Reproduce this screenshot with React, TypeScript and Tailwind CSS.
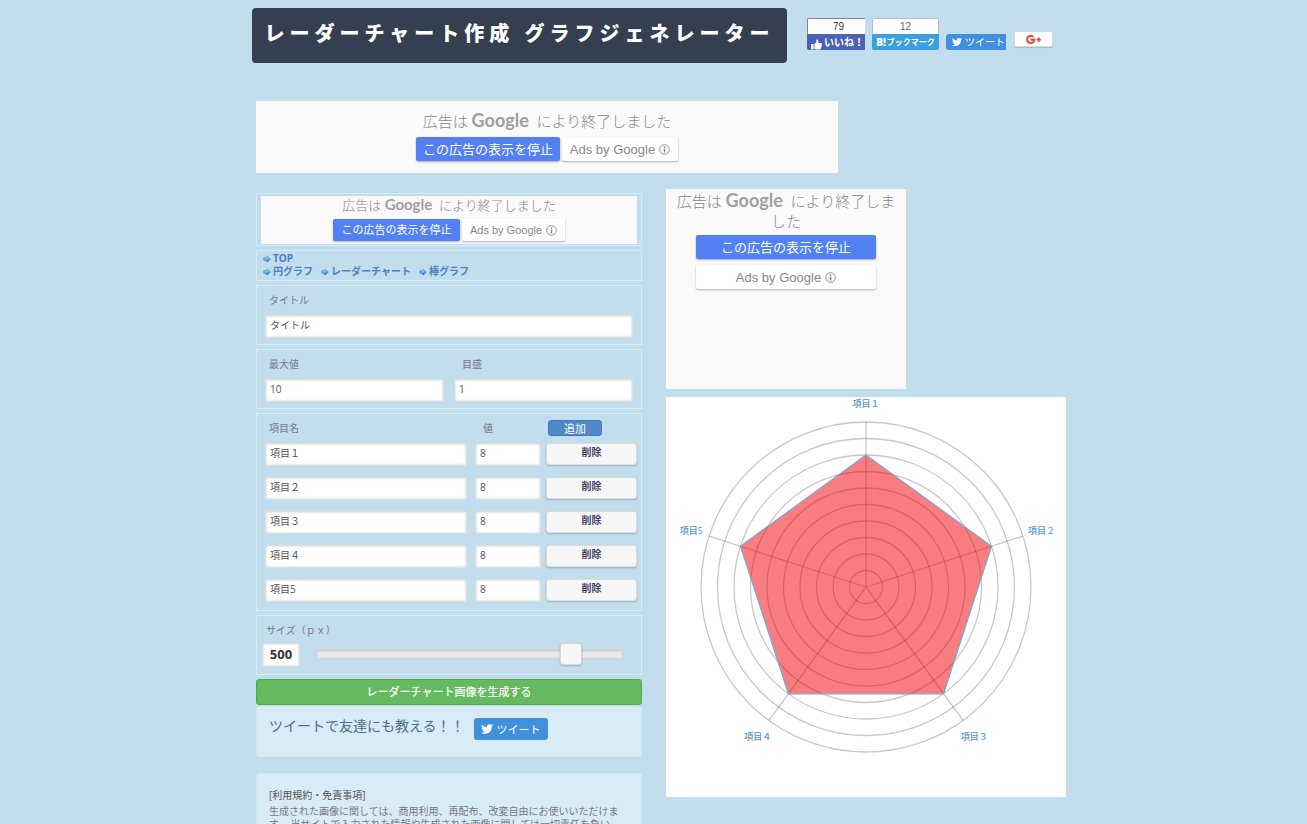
import React, { useState } from 'react';
import { FaGooglePlusG, FaTwitter } from 'react-icons/fa';

interface Item {
  id: number;
  name: string;
  value: string;
}

const INITIAL_ITEMS: Item[] = [
  { id: 1, name: '項目１', value: '8' },
  { id: 2, name: '項目２', value: '8' },
  { id: 3, name: '項目３', value: '8' },
  { id: 4, name: '項目４', value: '8' },
  { id: 5, name: '項目5', value: '8' },
];

const NAV_LINKS = ['円グラフ', 'レーダーチャート', '棒グラフ'];

const FIELD =
  'h-[23px] min-w-0 rounded-[3px] border border-[#dcdfe0] bg-white px-1 pb-1 text-[10px] leading-[13px] text-[#555] shadow-[inset_0_0_2px_1px_rgba(0,0,0,0.1)] outline-none';

const Panel: React.FC<{ className?: string; children: React.ReactNode }> = ({ className = '', children }) => (
  <section className={`border border-[#d5edf9] ${className}`}>{children}</section>
);

const GoogleWord: React.FC<{ className: string }> = ({ className }) => (
  <span className={`font-[Lato] leading-none font-bold text-[#a0a0a0] ${className}`}>Google</span>
);

const InfoIcon: React.FC = () => (
  <svg viewBox="0 0 12 12" className="h-[11px] w-[11px]" aria-hidden="true">
    <circle cx="6" cy="6" r="5.2" fill="none" stroke="currentColor" />
    <rect x="5.2" y="2.6" width="1.7" height="1.6" fill="currentColor" />
    <rect x="5.2" y="5" width="1.7" height="4.3" fill="currentColor" />
  </svg>
);

interface AdProps {
  size: 'wide' | 'small' | 'box';
}

const Ad: React.FC<AdProps> = ({ size }) => {
  if (size === 'small') {
    return (
      <aside className="bg-[#fafafa] pt-px pb-[3px] text-center text-[#888]">
        <p className="h-[17px] text-[13px] leading-4 font-light">
          広告は <GoogleWord className="text-[15px]" />&nbsp; により終了しました
        </p>
        <div className="mt-[5px] flex justify-center gap-[2px]">
          <button className="h-[22px] w-[127px] rounded-[2px] bg-[#5380f2] pb-px text-[11px] leading-[21px] text-white shadow-[0_1px_2px_rgba(0,0,0,0.3)]">
            この広告の表示を停止
          </button>
          <button className="flex h-[22px] w-[103px] items-center justify-center gap-1 rounded-[2px] bg-white font-['Liberation_Sans'] text-[11px] shadow-[0_1px_2px_rgba(0,0,0,0.3)]">
            Ads by Google <InfoIcon />
          </button>
        </div>
      </aside>
    );
  }

  const box = size === 'box';
  return (
    <aside
      className={`bg-[#fafafa] text-center text-[#888] ${box ? 'h-[200px] w-[240px] px-2 pt-[2px]' : 'h-[72px] w-[582px] pt-[10px]'}`}
    >
      <p className={`text-[15px] leading-5 font-light ${box ? 'h-10' : 'h-5'}`}>
        広告は <GoogleWord className="text-[18px]" />&nbsp; により終了しま{box && <br />}した
      </p>
      <div className={box ? 'mx-auto mt-1 flex w-[180px] flex-col gap-[6px]' : 'mt-[6px] flex justify-center gap-[2px]'}>
        <button
          className={`h-6 rounded-[2px] bg-[#5380f2] pb-px text-[13px] leading-[22px] text-white shadow-[0_1px_2px_rgba(0,0,0,0.3)] ${box ? '' : 'w-[144px]'}`}
        >
          この広告の表示を停止
        </button>
        <button
          className={`flex h-6 items-center justify-center gap-1 rounded-[2px] bg-white font-['Liberation_Sans'] text-[13px] shadow-[0_1px_2px_rgba(0,0,0,0.3)] ${box ? '' : 'w-[116px]'}`}
        >
          Ads by Google <InfoIcon />
        </button>
      </div>
    </aside>
  );
};

const SocialButtons: React.FC = () => (
  <div className="mt-[10px] flex h-8 items-end">
    <div className="w-[58px] overflow-hidden rounded-l-[2px]">
      <div className="h-4 border-t border-l border-[#7f8694] bg-white pl-1 text-center font-['Liberation_Sans'] text-[10px] leading-4 text-[#333]">
        79
      </div>
      <button className="flex h-4 w-full items-end justify-between bg-[#4c62b2] pr-px pl-1 text-[10px] leading-4 font-bold whitespace-nowrap text-white">
        <svg viewBox="0 0 11 11" className="h-[11px] w-[11px] shrink-0" fill="currentColor" aria-hidden="true">
          <path d="M0 5h2.6v5.6H0Z" />
          <path d="M3.4 5.2 5.4 3V0.8C5.4 0.2 7.3 0.2 7.3 2v2h2.6c1.2 0 1.2 1.5 0.6 1.8 0.6 0.5 0.4 1.4-0.2 1.6 0.5 0.6 0.2 1.3-0.4 1.5 0.3 0.8-0.2 1.6-1 1.6H5L3.4 10Z" />
        </svg>
        いいね！
      </button>
    </div>
    <div className="ml-[7px] w-[67px] overflow-hidden rounded-[2px]">
      <div className="h-4 border border-b-0 border-[#a9bfdc] bg-white text-center font-['Liberation_Sans'] text-[10px] leading-4 text-[#666]">
        12
      </div>
      <button className="flex h-4 w-full items-center justify-center gap-px bg-[#3ca0dc] text-[8px] leading-4 font-bold whitespace-nowrap text-white">
        <span className="text-[10px] font-extrabold">B!</span>ブックマーク
      </button>
    </div>
    <button className="ml-[7px] flex h-4 w-[60px] items-center justify-end gap-[3px] rounded-l-[3px] bg-[#4190de] pr-px text-[10px] leading-4 whitespace-nowrap text-white">
      <FaTwitter className="h-[10px] w-[10px]" />
      ツイート
    </button>
    <button
      aria-label="Google+"
      className="mb-[3px] ml-2 flex h-4 w-[39px] items-center justify-center rounded-[2px] border border-[#d8d8d8] bg-white text-[#d64a3f] shadow-[0_1px_1px_rgba(0,0,0,0.15)]"
    >
      <FaGooglePlusG className="h-[15px] w-[15px]" stroke="currentColor" strokeWidth="20" />
    </button>
  </div>
);

const NavLink: React.FC<{ label: string }> = ({ label }) => (
  <a href="#" className="flex items-center gap-[2px]">
    <svg viewBox="0 0 8 8" className="mt-px h-2 w-2" aria-hidden="true">
      <path d="M4 0.4 8 4 4 7.6 3.4 6.2H1.4L0 4.6V3.4L1.4 2H3.4Z" fill="#68a8e0" />
      <path d="M3 5.2 7.4 4.2 4 7.4Z" fill="#3f83c8" />
      <path d="M1.2 3.4 3.8 3V1.8L5.4 3.4Z" fill="#b4daf5" />
    </svg>
    {label}
  </a>
);

const CX = 200;
const CY = 190;
const RING = 165;

const pointAt = (index: number, count: number, radius: number) => {
  const angle = (Math.PI * 2 * index) / count - Math.PI / 2;
  return { x: CX + Math.cos(angle) * radius, y: CY + Math.sin(angle) * radius };
};

interface RadarChartProps {
  items: Item[];
  max: number;
  step: number;
}

const RadarChart: React.FC<RadarChartProps> = ({ items, max, step }) => {
  const limit = max > 0 ? max : 10;
  const unit = step > 0 ? step : 1;
  const rings = Array.from({ length: Math.min(100, Math.floor(limit / unit)) }, (_, i) => ((i + 1) * unit * RING) / limit);
  const points = items
    .map((item, i) => {
      const p = pointAt(i, items.length, (Number(item.value) / limit) * RING);
      return `${p.x},${p.y}`;
    })
    .join(' ');

  return (
    <svg viewBox="0 0 400 400" className="mt-2 block w-full max-w-[400px] bg-white">
      <g fill="none" stroke="#000" strokeWidth="1.3" strokeOpacity="0.22">
        {rings.map((r) => (
          <circle key={r} cx={CX} cy={CY} r={r} />
        ))}
        {items.map((item, i) => {
          const p = pointAt(i, items.length, RING);
          return <line key={item.id} x1={CX} y1={CY} x2={p.x} y2={p.y} />;
        })}
      </g>
      <polygon points={points} fill="#f20008" fillOpacity="0.51" stroke="#7ba7d0" strokeWidth="1.2" />
      <g fill="#5596cb" fontSize="9" fontWeight="500">
        {items.map((item, i) => {
          const p = pointAt(i, items.length, 184);
          const cos = p.x - CX;
          const anchor = Math.abs(cos) < 120 ? 'middle' : cos > 0 ? 'start' : 'end';
          const x = anchor === 'middle' ? p.x : cos > 0 ? p.x - 13 : p.x + 12;
          return (
            <text key={item.id} x={x} y={p.y + 4} textAnchor={anchor}>
              {item.name}
            </text>
          );
        })}
      </g>
    </svg>
  );
};

export default function App() {
  const [title, setTitle] = useState('タイトル');
  const [max, setMax] = useState('10');
  const [step, setStep] = useState('1');
  const [size, setSize] = useState('500');
  const [items, setItems] = useState<Item[]>(INITIAL_ITEMS);

  const updateItem = (id: number, patch: Partial<Item>) => {
    setItems(items.map((item) => (item.id === id ? { ...item, ...patch } : item)));
  };

  const addItem = () => {
    const id = Math.max(0, ...items.map((item) => item.id)) + 1;
    setItems([...items, { id, name: `項目${id}`, value: '8' }]);
  };

  return (
    <div className="h-screen overflow-y-auto bg-[#c2ddeb] font-['Open_Sans','Noto_Sans_CJK_JP',sans-serif] text-[10px] leading-[13px] text-[#778] [scrollbar-width:none]">
      <div className="mx-auto max-w-[827px] pt-2 pl-3">
        <header className="flex items-start gap-5">
          <h1 className="flex h-[55px] w-[535px] items-center justify-center rounded-[4px] bg-[#343f50] pb-1 text-[20px] leading-none font-black tracking-[5px] whitespace-nowrap text-white">
            レーダーチャート作成 グラフジェネレーター
          </h1>
          <SocialButtons />
        </header>

        <main className="pl-1">
          <div className="mt-[38px]">
            <Ad size="wide" />
          </div>

          <div className="mt-4 flex items-start gap-6">
            <div className="mt-1 w-[386px] shrink-0">
              <form className="flex flex-col gap-1" onSubmit={(e) => e.preventDefault()}>
                <Panel className="px-1 pt-[2px] pb-px">
                  <Ad size="small" />
                </Panel>

                <Panel className="px-[6px] pt-px pb-[2px]">
                  <nav className="font-bold text-[#4a80c4]">
                    <div className="flex">
                      <NavLink label="TOP" />
                    </div>
                    <div className="flex gap-2">
                      {NAV_LINKS.map((label) => (
                        <NavLink key={label} label={label} />
                      ))}
                    </div>
                  </nav>
                </Panel>

                <Panel className="flex flex-col gap-2 px-2 pt-2 pb-[6px]">
                  <label htmlFor="title" className="pl-1">タイトル</label>
                  <input id="title" className={FIELD} value={title} onChange={(e) => setTitle(e.target.value)} />
                </Panel>

                <Panel className="grid grid-cols-2 gap-[10px] px-2 pt-2 pb-[6px]">
                  <div className="flex flex-col gap-2">
                    <label htmlFor="max" className="pl-1">最大値</label>
                    <input id="max" className={FIELD} value={max} onChange={(e) => setMax(e.target.value)} />
                  </div>
                  <div className="flex flex-col gap-2">
                    <label htmlFor="step" className="pl-2">目盛</label>
                    <input id="step" className={FIELD} value={step} onChange={(e) => setStep(e.target.value)} />
                  </div>
                </Panel>

                <Panel className="pt-[6px] pr-1 pb-2 pl-2">
                  <div className="mb-[7px] flex h-4 items-center">
                    <span className="flex-1 pl-1">項目名</span>
                    <span className="w-[66px] pl-2">値</span>
                    <div className="ml-[5px] w-[91px] pl-[2px]">
                      <button
                        type="button"
                        onClick={addItem}
                        className="block h-4 w-[54px] rounded-[3px] border border-[#3f7bbd] bg-[#5088c8] text-[11px] leading-[13px] text-white"
                      >
                        追加
                      </button>
                    </div>
                  </div>
                  <div className="flex flex-col gap-[11px]">
                    {items.map((item) => (
                      <div key={item.id} className="flex">
                        <input
                          aria-label="項目名"
                          className={`${FIELD} flex-1`}
                          value={item.name}
                          onChange={(e) => updateItem(item.id, { name: e.target.value })}
                        />
                        <input
                          aria-label="値"
                          className={`${FIELD} ml-2 w-[66px]`}
                          value={item.value}
                          onChange={(e) => updateItem(item.id, { value: e.target.value })}
                        />
                        <button
                          type="button"
                          onClick={() => setItems(items.filter((other) => other.id !== item.id))}
                          className="ml-[5px] h-[22px] w-[91px] rounded-[3px] border border-[#dcdcdc] bg-[#f6f6f6] pb-[3px] font-bold text-[#446] shadow-[0_1px_2px_rgba(0,0,0,0.2)]"
                        >
                          削除
                        </button>
                      </div>
                    ))}
                  </div>
                </Panel>

                <Panel className="pt-2 pr-[17px] pb-[7px] pl-[5px]">
                  <label htmlFor="size" className="block pl-1">サイズ（ｐｘ）</label>
                  <div className="mt-[6px] flex h-6 items-center gap-4">
                    <input
                      id="size"
                      className="h-6 w-[38px] rounded-[3px] border border-[#dcdfe0] bg-white pb-[3px] text-center text-[13px] font-bold text-[#333] shadow-[inset_0_0_2px_1px_rgba(0,0,0,0.1)] outline-none"
                      value={size}
                      onChange={(e) => setSize(e.target.value)}
                    />
                    <input
                      type="range"
                      aria-label="サイズ"
                      min={200}
                      max={550}
                      value={size}
                      onChange={(e) => setSize(e.target.value)}
                      className="mb-[3px] h-[10px] min-w-0 flex-1 appearance-none rounded-[3px] border border-[#d4d4d4] bg-[#e7e7e7] shadow-[inset_0_1px_2px_rgba(0,0,0,0.15)] [&::-webkit-slider-thumb]:h-[22px] [&::-webkit-slider-thumb]:w-[22px] [&::-webkit-slider-thumb]:appearance-none [&::-webkit-slider-thumb]:rounded-[3px] [&::-webkit-slider-thumb]:border [&::-webkit-slider-thumb]:border-[#d6d6d6] [&::-webkit-slider-thumb]:bg-[#f6f6f6] [&::-webkit-slider-thumb]:shadow-[0_1px_2px_rgba(0,0,0,0.2)]"
                    />
                  </div>
                </Panel>

                <button className="h-[26px] rounded-[3px] border border-[#4fab4f] bg-[#65b95f] text-[11px] leading-[22px] font-medium text-white">
                  レーダーチャート画像を生成する
                </button>
              </form>

              <section className="mt-px flex h-[51px] items-start gap-[9px] rounded-[3px] border border-[#cde9f3] bg-[#d9ebf6] pt-[11px] pl-3">
                <p className="text-[14px] leading-4 text-[#48708a]">ツイートで友達にも教える！！</p>
                <button className="flex h-[22px] w-[74px] items-center justify-center gap-1 rounded-[3px] bg-[#4190de] text-[11px] text-white">
                  <FaTwitter className="h-3 w-3" />
                  ツイート
                </button>
              </section>

              <section className="mt-4 rounded-[3px] border border-[#cde9f3] bg-[#d9ebf6] px-3 pt-[13px] pb-4">
                <h2 className="leading-4 text-[#555]">[利用規約・免責事項]</h2>
                <p className="mt-[2px]">
                  生成された画像に関しては、商用利用、再配布、改変自由にお使いいただけま
                  <br />
                  す。 当サイトで入力された情報や生成された画像に関しては一切責任を負い
                </p>
              </section>
            </div>

            <div className="min-w-0 flex-1">
              <Ad size="box" />
              <RadarChart items={items} max={Number(max)} step={Number(step)} />
            </div>
          </div>
        </main>
      </div>
    </div>
  );
}
